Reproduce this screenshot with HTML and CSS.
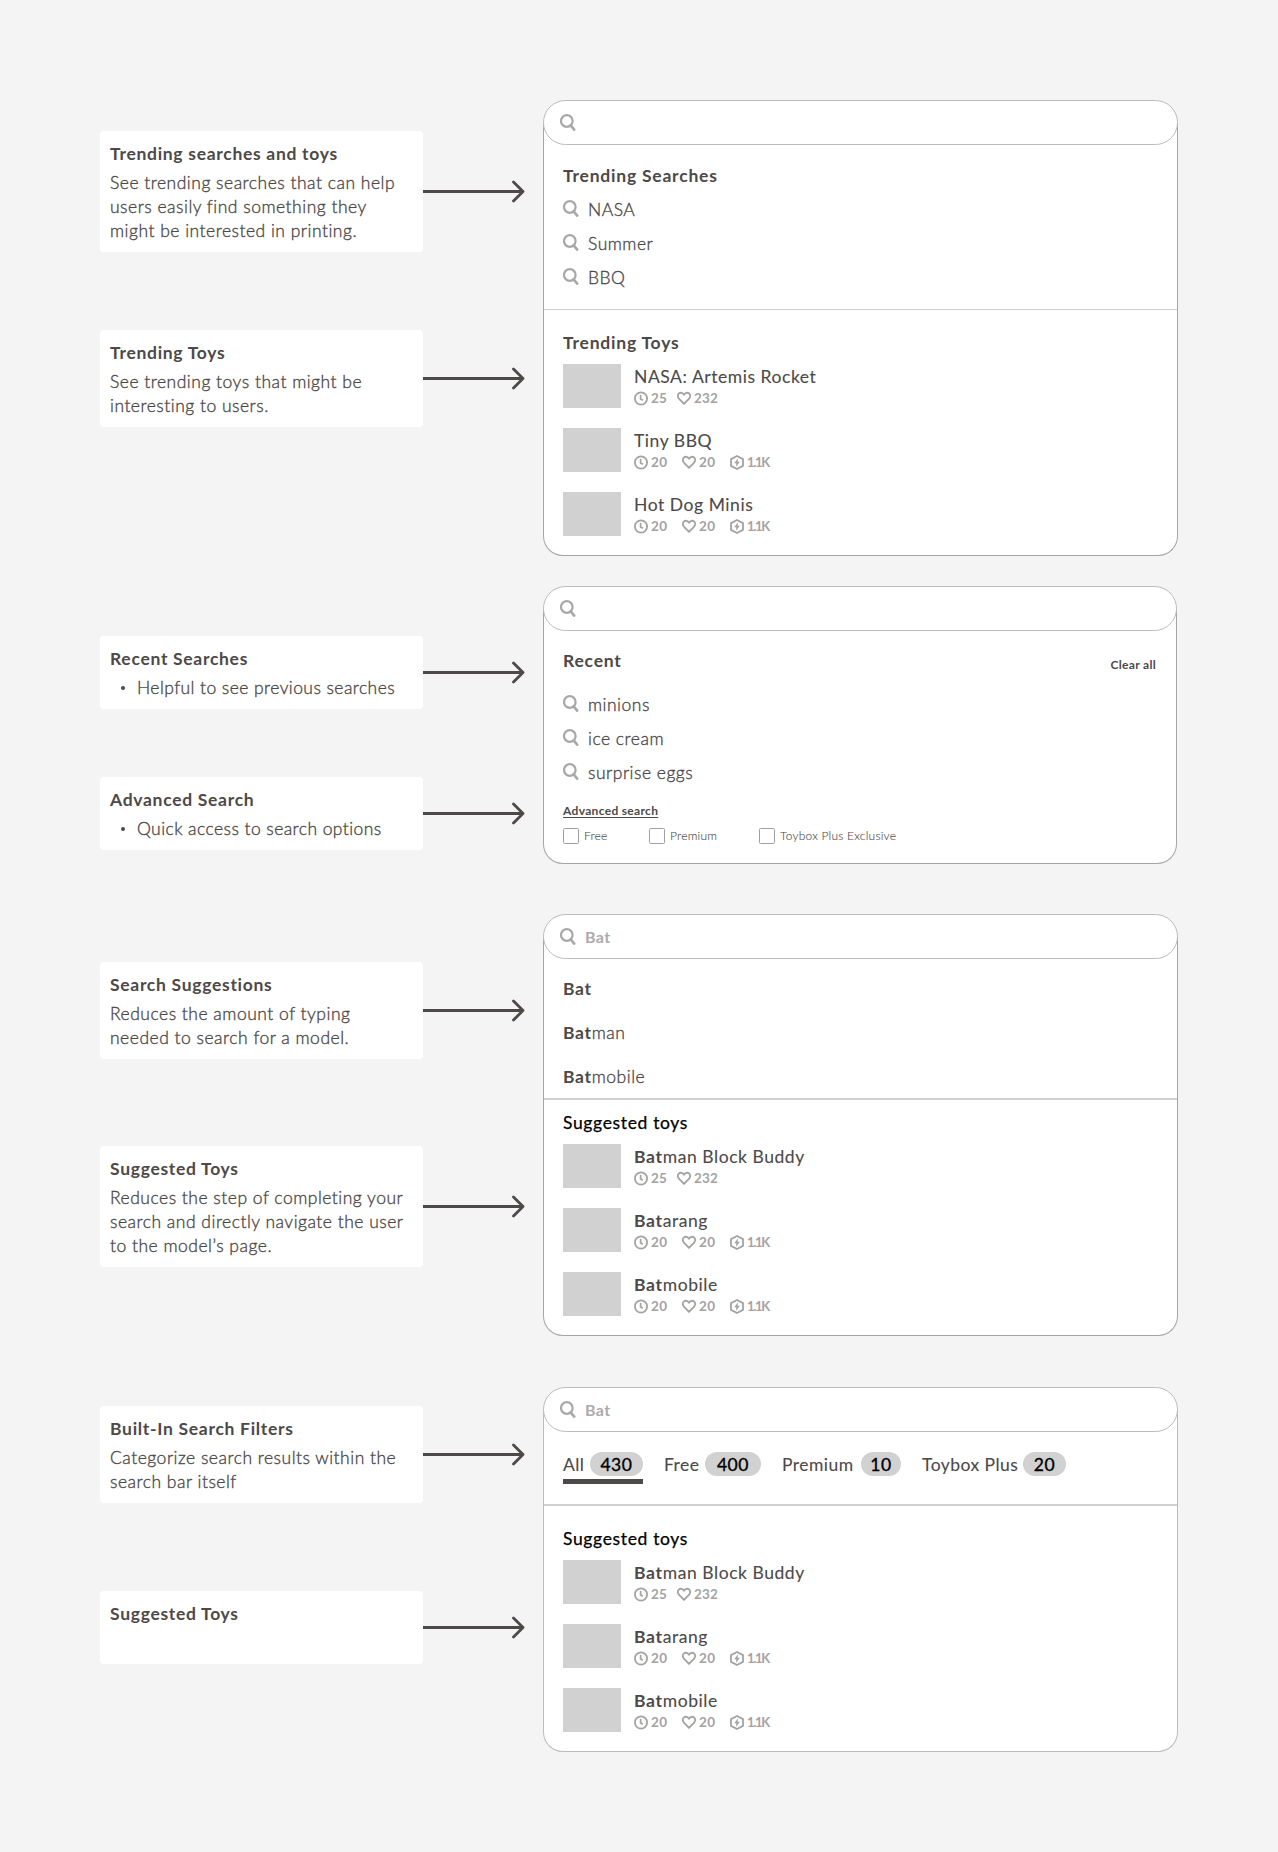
FILE: index.html
```html
<!DOCTYPE html>
<html lang="en">
<head>
<meta charset="utf-8">
<title>Search bar annotations</title>
<link rel="stylesheet" href="styles.css">
</head>
<body>
<svg class="defs" width="0" height="0" aria-hidden="true">
  <symbol id="search" viewBox="0 0 16 17">
    <circle cx="6.8" cy="7" r="5.8" fill="none" stroke="currentColor" stroke-width="2.2"/>
    <path d="M10.6 11.4 14.2 15.6" fill="none" stroke="currentColor" stroke-width="2.6" stroke-linecap="round"/>
  </symbol>
  <symbol id="clock" viewBox="0 0 14 14">
    <circle cx="7" cy="7" r="6.1" fill="none" stroke="currentColor" stroke-width="1.8"/>
    <path d="M6.6 3.6V7.4L8.9 8.8" fill="none" stroke="currentColor" stroke-width="1.7"/>
  </symbol>
  <symbol id="heart" viewBox="0 0 14 14">
    <path d="M7 12.4 1.9 7.1C.4 5.500.5 3 1.900 1.900 3.600.7 5.700 1.200 7 3.200 8.300 1.200 10.400.7 12.100 1.900 13.500 3 13.600 5.500 12.100 7.100Z" fill="none" stroke="currentColor" stroke-width="1.800" stroke-linejoin="round"/>
  </symbol>
  <symbol id="bolt" viewBox="0 0 14 15">
    <path d="M7 1 13 4.100V10.900L7 14 1 10.900V4.100Z" fill="none" stroke="currentColor" stroke-width="1.800" stroke-linejoin="round"/>
    <path d="M8 3.200 4.200 8.300H6.300L6 11.800 9.800 6.700H7.600Z" fill="currentColor"/>
  </symbol>
  <symbol id="arrow" viewBox="0 0 102 23">
    <path d="M0 11.500H100M90.500 2 100 11.500 90.500 21" fill="none" stroke="currentColor" stroke-width="2.800" stroke-linecap="round" stroke-linejoin="round"/>
  </symbol>
</svg>
<main class="board">

  <section class="row row-trending">
    <div class="notes">
      <div class="note"><div class="note-card"><h3>Trending searches and toys</h3><p>See trending searches that can help<br>users easily find something they<br>might be interested in printing.</p></div><svg class="arrow"><use href="#arrow"/></svg></div>
      <div class="note"><div class="note-card"><h3>Trending Toys</h3><p>See trending toys that might be<br>interesting to users.</p></div><svg class="arrow"><use href="#arrow"/></svg></div>
    </div>
    <div class="panel">
      <div class="search"><svg class="glass"><use href="#search"/></svg></div>
      <div class="body">
        <div class="block queries">
          <h2>Trending Searches</h2>
          <ul class="query-list">
            <li><svg class="glass"><use href="#search"/></svg>NASA</li>
            <li><svg class="glass"><use href="#search"/></svg>Summer</li>
            <li><svg class="glass"><use href="#search"/></svg>BBQ</li>
          </ul>
        </div>
        <div class="block toys ruled-thin">
          <h2>Trending Toys</h2>
          <ul class="toy-list">
            <li><i class="thumb"></i><div><h4>NASA: Artemis Rocket</h4><div class="stats tight"><span><svg><use href="#clock"/></svg>25</span><span><svg><use href="#heart"/></svg>232</span></div></div></li>
            <li><i class="thumb"></i><div><h4>Tiny BBQ</h4><div class="stats"><span><svg><use href="#clock"/></svg>20</span><span><svg><use href="#heart"/></svg>20</span><span class="narrow"><svg><use href="#bolt"/></svg>1.1K</span></div></div></li>
            <li><i class="thumb"></i><div><h4>Hot Dog Minis</h4><div class="stats"><span><svg><use href="#clock"/></svg>20</span><span><svg><use href="#heart"/></svg>20</span><span class="narrow"><svg><use href="#bolt"/></svg>1.1K</span></div></div></li>
          </ul>
        </div>
      </div>
    </div>
  </section>

  <section class="row row-recent">
    <div class="notes">
      <div class="note"><div class="note-card"><h3>Recent Searches</h3><ul><li>Helpful to see previous searches</li></ul></div><svg class="arrow"><use href="#arrow"/></svg></div>
      <div class="note"><div class="note-card"><h3>Advanced Search</h3><ul><li>Quick access to search options</li></ul></div><svg class="arrow"><use href="#arrow"/></svg></div>
    </div>
    <div class="panel">
      <div class="search"><svg class="glass"><use href="#search"/></svg></div>
      <div class="body">
        <div class="block recent">
          <div class="recent-head"><h2>Recent</h2><a class="clear">Clear all</a></div>
          <ul class="query-list">
            <li><svg class="glass"><use href="#search"/></svg>minions</li>
            <li><svg class="glass"><use href="#search"/></svg>ice cream</li>
            <li><svg class="glass"><use href="#search"/></svg>surprise eggs</li>
          </ul>
          <a class="advanced">Advanced search</a>
          <div class="options"><label><i class="check"></i>Free</label><label><i class="check"></i>Premium</label><label><i class="check"></i>Toybox Plus Exclusive</label></div>
        </div>
      </div>
    </div>
  </section>

  <section class="row row-suggest">
    <div class="notes">
      <div class="note"><div class="note-card"><h3>Search Suggestions</h3><p>Reduces the amount of typing<br>needed to search for a model.</p></div><svg class="arrow"><use href="#arrow"/></svg></div>
      <div class="note"><div class="note-card"><h3>Suggested Toys</h3><p>Reduces the step of completing your<br>search and directly navigate the user<br>to the model’s page.</p></div><svg class="arrow"><use href="#arrow"/></svg></div>
    </div>
    <div class="panel">
      <div class="search"><svg class="glass"><use href="#search"/></svg>Bat</div>
      <div class="body">
        <ul class="block completions"><li><b>Bat</b></li><li><b>Bat</b>man</li><li><b>Bat</b>mobile</li></ul>
        <div class="block toys suggested ruled">
          <h2>Suggested toys</h2>
          <ul class="toy-list">
            <li><i class="thumb"></i><div><h4><b>Bat</b>man Block Buddy</h4><div class="stats tight"><span><svg><use href="#clock"/></svg>25</span><span><svg><use href="#heart"/></svg>232</span></div></div></li>
            <li><i class="thumb"></i><div><h4><b>Bat</b>arang</h4><div class="stats"><span><svg><use href="#clock"/></svg>20</span><span><svg><use href="#heart"/></svg>20</span><span class="narrow"><svg><use href="#bolt"/></svg>1.1K</span></div></div></li>
            <li><i class="thumb"></i><div><h4><b>Bat</b>mobile</h4><div class="stats"><span><svg><use href="#clock"/></svg>20</span><span><svg><use href="#heart"/></svg>20</span><span class="narrow"><svg><use href="#bolt"/></svg>1.1K</span></div></div></li>
          </ul>
        </div>
      </div>
    </div>
  </section>

  <section class="row row-filters">
    <div class="notes">
      <div class="note"><div class="note-card"><h3>Built-In Search Filters</h3><p>Categorize search results within the<br>search bar itself</p></div><svg class="arrow"><use href="#arrow"/></svg></div>
      <div class="note"><div class="note-card short"><h3>Suggested Toys</h3></div><svg class="arrow"><use href="#arrow"/></svg></div>
    </div>
    <div class="panel">
      <div class="search"><svg class="glass"><use href="#search"/></svg>Bat</div>
      <div class="body">
        <div class="block tabs">
          <div class="tab active">All<span class="pill pill-430">430</span></div>
          <div class="tab">Free<span class="pill pill-400">400</span></div>
          <div class="tab">Premium<span class="pill pill-10">10</span></div>
          <div class="tab">Toybox Plus<span class="pill pill-20">20</span></div>
        </div>
        <div class="block toys suggested ruled">
          <h2>Suggested toys</h2>
          <ul class="toy-list">
            <li><i class="thumb"></i><div><h4><b>Bat</b>man Block Buddy</h4><div class="stats tight"><span><svg><use href="#clock"/></svg>25</span><span><svg><use href="#heart"/></svg>232</span></div></div></li>
            <li><i class="thumb"></i><div><h4><b>Bat</b>arang</h4><div class="stats"><span><svg><use href="#clock"/></svg>20</span><span><svg><use href="#heart"/></svg>20</span><span class="narrow"><svg><use href="#bolt"/></svg>1.1K</span></div></div></li>
            <li><i class="thumb"></i><div><h4><b>Bat</b>mobile</h4><div class="stats"><span><svg><use href="#clock"/></svg>20</span><span><svg><use href="#heart"/></svg>20</span><span class="narrow"><svg><use href="#bolt"/></svg>1.1K</span></div></div></li>
          </ul>
        </div>
      </div>
    </div>
  </section>

</main>
</body>
</html>
```
FILE: styles.css
```css
* { box-sizing: border-box; margin: 0; padding: 0; }

body {
  background: #f4f4f4;
  color: #4d4948;
  font: 300 17.5px/24px Lato, "Open Sans", sans-serif;
  letter-spacing: .5px;
  -webkit-text-stroke: .35px currentColor;
}

ul { list-style: none; }
svg { display: block; flex: none; }
.defs { position: absolute; }

.board { height: 1852px; padding: 100px 0 0 100px; }
.row { display: flex; justify-content: space-between; width: 1078px; }
.row + .row { margin-top: 30px; }
.row.row-suggest { margin-top: 50px; }
.row.row-filters { margin-top: 51px; }

/* Annotation column */
.notes { display: flex; flex-direction: column; padding-top: 31px; gap: 78px; }
.row-recent .notes { padding-top: 50px; gap: 68px; }
.row-suggest .notes { padding-top: 48px; gap: 87px; }
.row-filters .notes { padding-top: 19.4px; gap: 88px; }
.note { display: flex; align-items: center; }
.note-card {
  width: 323px;
  padding: 11px 0 9px 10px;
  border-radius: 4px;
  background: #fff;
  white-space: nowrap;
}
.note-card.short { height: 73px; }
.note-card p, .note-card ul { margin-top: 5px; }
.note-card li { display: flex; align-items: center; gap: 12px; padding-left: 11px; letter-spacing: .43px; }
.note-card li::before { content: ""; width: 4px; height: 4px; border-radius: 50%; background: #4d4948; }
.arrow { width: 102px; height: 23px; }

h2, h3, b {
  font-size: 17.5px;
  font-weight: 700;
  letter-spacing: .7px;
  -webkit-text-stroke: 0;
}
h2 { letter-spacing: .78px; }

/* Search panels */
.panel { width: 635px; }
.row-recent .panel { width: 634px; margin-right: 1px; }
.search {
  position: relative;
  display: flex;
  align-items: center;
  gap: 9px;
  height: 45px;
  padding-left: 16px;
  border: 1px solid #bcbcbc;
  border-radius: 22.5px;
  background: #fff;
  color: #ababab;
  font-size: 16px;
  font-weight: 700;
  letter-spacing: .4px;
  -webkit-text-stroke: 0;
}
.body {
  margin-top: -23px;
  padding-top: 23px;
  border: 1px solid #a5a5a5;
  border-top: 0;
  border-radius: 0 0 20px 20px;
  background: #fff;
}
.row-filters .body { border-color: #bcbcbc; }
.block { padding-left: 19px; padding-right: 20px; }
.glass { width: 16px; height: 17px; color: #a8a8a8; }

.queries { padding-top: 19px; padding-bottom: 14px; }
.queries .query-list { margin-top: 5px; }
.query-list li { display: flex; align-items: center; gap: 9px; height: 34px; }
.query-list .glass { margin-top: -3px; }

/* Toy results */
.toys { padding-top: 21px; padding-bottom: 19px; }
.ruled-thin { border-top: 1px solid #cfcfcf; }
.ruled { border-top: 2px solid #d0d0d0; }
.row-suggest .toys { padding-top: 11px; }
.suggested h2 { color: #000; font-weight: 400; letter-spacing: .65px; -webkit-text-stroke: .25px currentColor; }
.toy-list { display: flex; flex-direction: column; gap: 20px; margin-top: 9px; }
.toy-list li { display: flex; gap: 13px; height: 44px; }
.thumb { width: 58px; background: #d1d1d1; }
h4 { padding-top: 1px; font-size: 17.5px; font-weight: 400; letter-spacing: .55px; -webkit-text-stroke: .1px currentColor; }
.stats { display: flex; gap: 13px; margin-top: 1px; }
.stats.tight { gap: 9px; }
.stats span {
  display: flex;
  align-items: center;
  gap: 3px;
  min-width: 35px;
  height: 16px;
  color: #a3a3a3;
  font-size: 13.5px;
  font-weight: 700;
  letter-spacing: .4px;
  -webkit-text-stroke: 0;
}
.stats.tight span { min-width: 34px; letter-spacing: .2px; }
.stats .narrow { font-size: 13px; letter-spacing: -1.3px; }
.stats svg { width: 14px; height: 15px; }

/* Recent searches */
.recent { padding-top: 18px; padding-bottom: 19px; }
.recent-head { display: flex; justify-content: space-between; margin-bottom: 15px; }
.clear, .advanced { font-size: 12px; font-weight: 700; letter-spacing: .32px; -webkit-text-stroke: 0; }
.clear { padding-top: 4px; margin-bottom: -4px; }
.advanced {
  display: block;
  margin-top: 13px;
  line-height: 16px;
  text-decoration: underline 1px;
  text-underline-offset: 1.5px;
}
.options { display: flex; gap: 41px; margin-top: 9px; font-size: 12px; line-height: 16px; letter-spacing: .22px; -webkit-text-stroke: .1px currentColor; }
.options label { display: flex; gap: 5px; white-space: nowrap; }
.options label:first-child { width: 45px; }
.options label:nth-child(2) { width: 69px; }
.check { width: 16px; height: 16px; border: 1.5px solid #a0a0a0; border-radius: 1.5px; }

/* Completions */
.completions { height: 139px; padding-top: 8px; }
.completions li { height: 44px; line-height: 44px; }

/* Filter tabs */
.tabs { display: flex; gap: 21px; height: 72px; padding-top: 20px; }
.tab {
  display: flex;
  justify-content: space-between;
  width: 80px;
  height: 32px;
  font-weight: 400;
  line-height: 26px;
  letter-spacing: .45px;
  white-space: nowrap;
  -webkit-text-stroke: .1px currentColor;
}
.tab:nth-child(2) { width: 97px; }
.tab:nth-child(3) { width: 119px; }
.tab:nth-child(4) { width: 144px; }
.tab.active { border-bottom: 5px solid #4d4948; }
.pill {
  height: 24px;
  border-radius: 12px;
  background: #d1d1d1;
  color: #000;
  text-align: center;
  letter-spacing: .6px;
  -webkit-text-stroke: .35px currentColor;
}
.pill-430 { width: 53px; }
.pill-400 { width: 56px; }
.pill-10 { width: 40px; }
.pill-20 { width: 43px; }
```
